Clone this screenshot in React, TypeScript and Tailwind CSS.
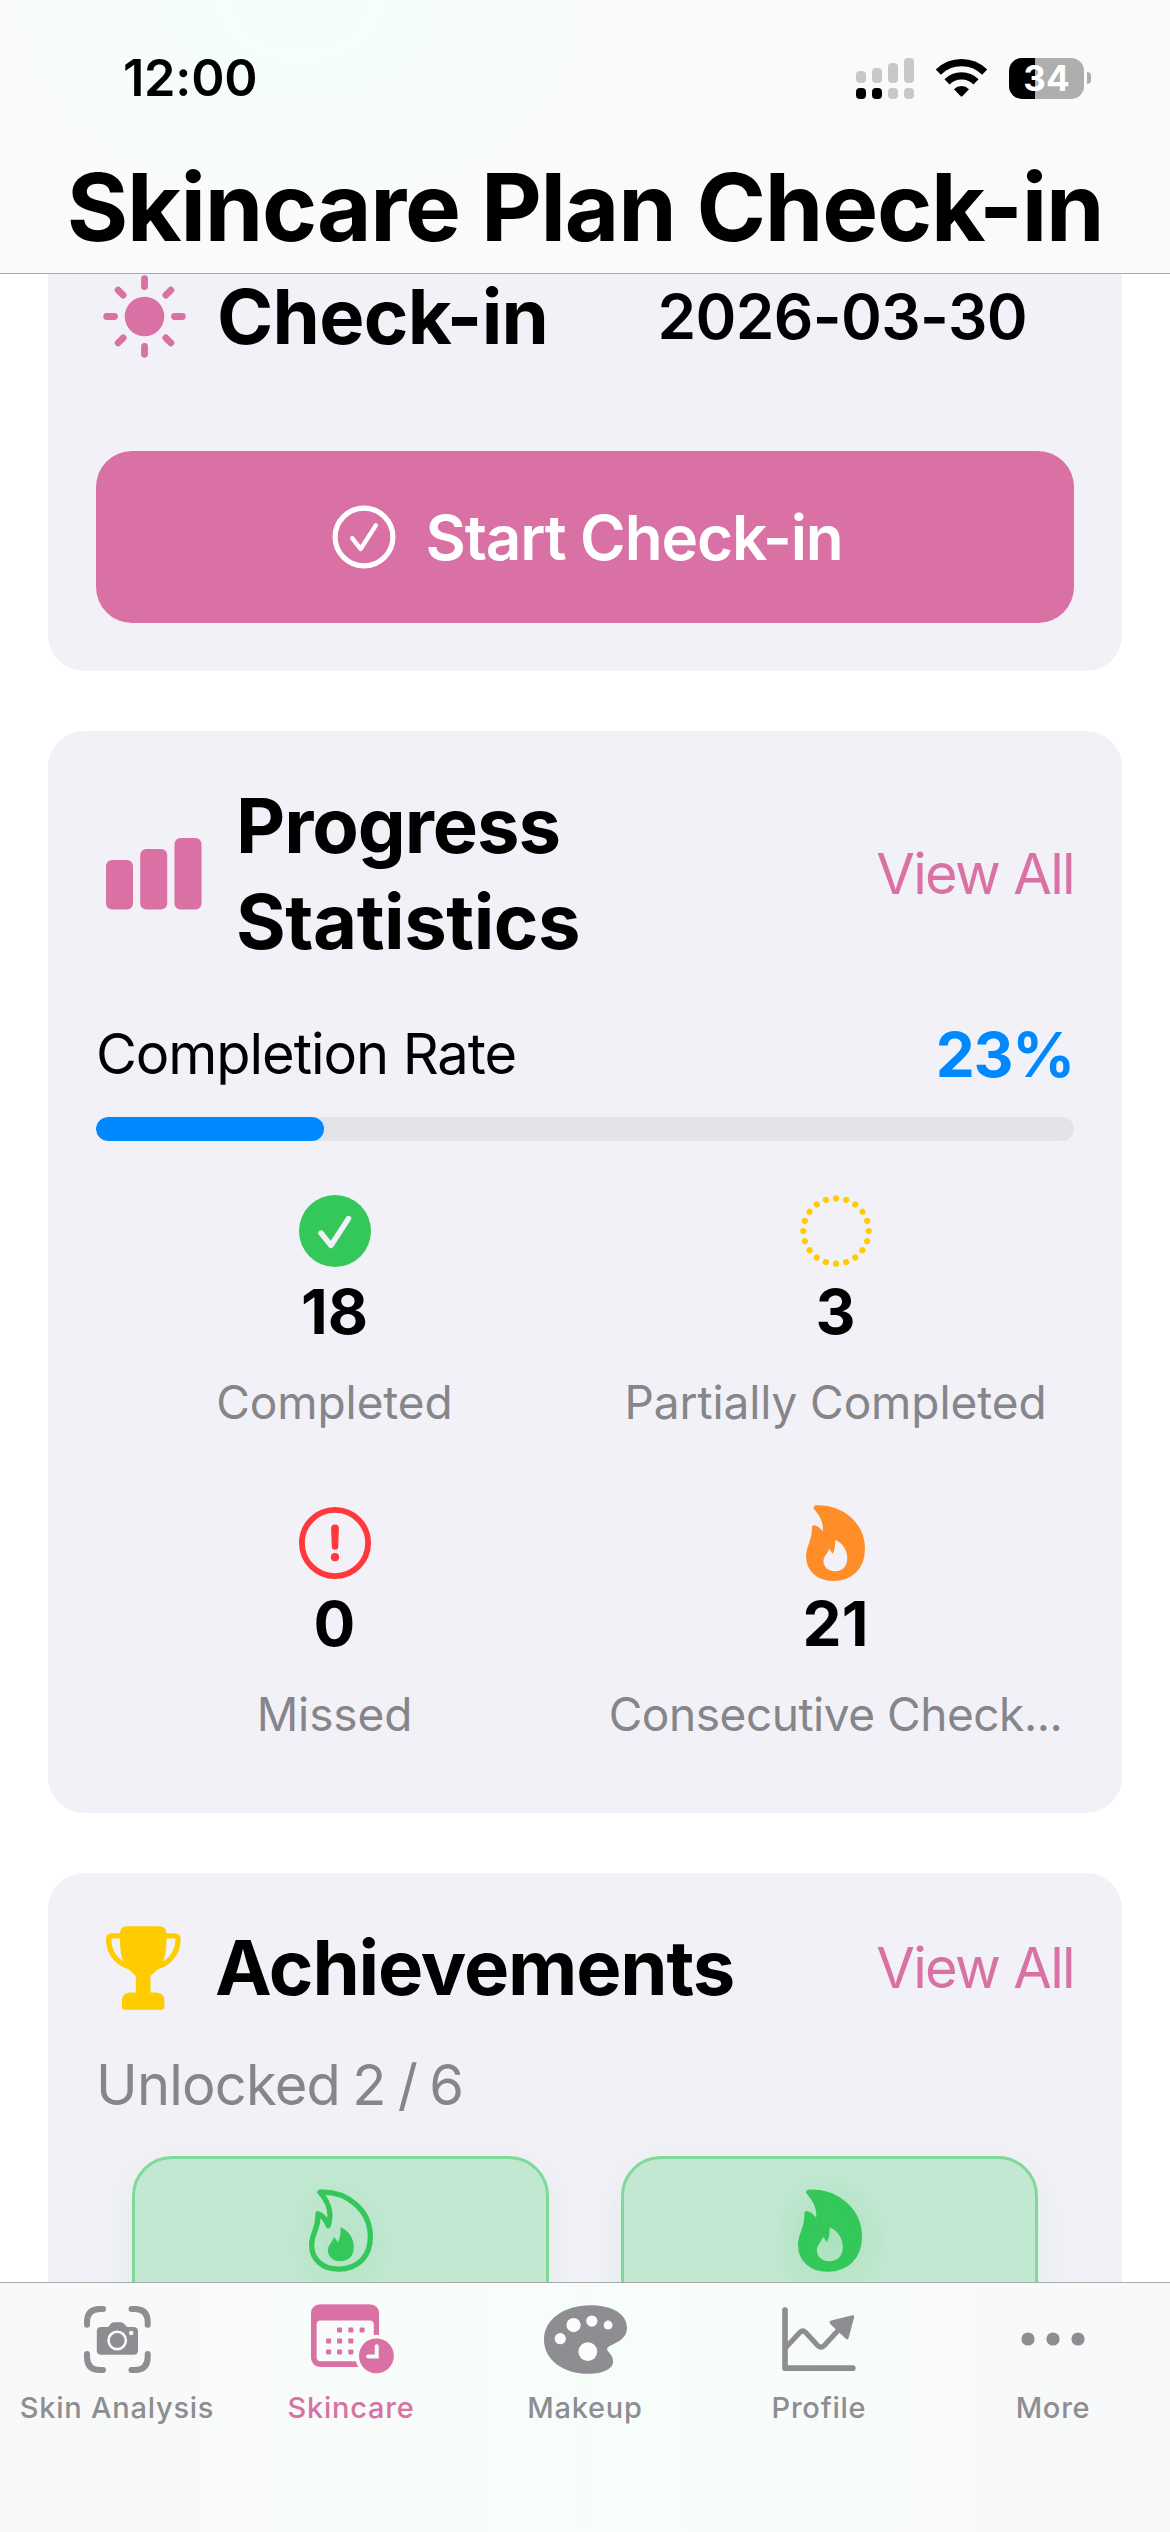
import React from 'react';

type Tone = 'filled' | 'outline';

const FLAME_OUTER = 'M686 1176 C770 1172 838 1232 838 1310 C838 1370 800 1408 742 1408 C692 1408 661 1377 661 1335 C661 1298 683 1287 680 1241 C694 1244 706 1262 711 1277 C722 1245 715 1208 686 1176Z';
const FLAME_INNER = 'M748 1282 C775 1292 788 1318 788 1342 C788 1368 773 1384 747 1384 C725 1384 710 1370 710 1350 C710 1335 725 1325 728 1310 C733 1315 737 1321 740 1327 C747 1315 749 1300 748 1282Z';

const Flame: React.FC<{ tone: Tone; className: string }> = ({ tone, className }) => (
  <svg viewBox="653 1167 193 249" className={className}>
    {tone === 'filled' ? (
      <path d={FLAME_OUTER + FLAME_INNER} fill="currentColor" fillRule="evenodd" />
    ) : (
      <path d={FLAME_INNER} fill="currentColor" />
    )}
    <path d={FLAME_OUTER} fill="none" stroke="currentColor" strokeWidth="16" strokeLinejoin="round" />
  </svg>
);

const SunIcon = () => (
  <svg viewBox="-41.5 -41.5 83 83" className="w-[83px] h-[83px] text-[#d971a4]">
    <circle r="19.8" fill="currentColor" />
    {[0, 45, 90, 135, 180, 225, 270, 315].map((angle) => (
      <path key={angle} d={angle % 90 === 0 ? 'M0 -37.8V-30' : 'M0 -37.3V-30.2'} transform={`rotate(${angle})`} stroke="currentColor" strokeWidth="6.8" strokeLinecap="round" />
    ))}
  </svg>
);

const BarsIcon = () => (
  <svg viewBox="0 0 96 72" className="w-24 h-[72px]" fill="#d971a4">
    <rect x="0" y="22" width="27" height="49.5" rx="6" />
    <rect x="34.2" y="11" width="27" height="60.5" rx="6" />
    <rect x="68.5" y="0" width="27" height="71.5" rx="6" />
  </svg>
);

const TrophyIcon = () => (
  <svg viewBox="48 378 226 252" className="w-[75px] h-[84px] text-[#ffcc00]">
    <path
      d="M90 400 Q90 378 112 378 H208 Q230 378 230 400 C232 460 224 486 205 507 L182 528 V578 H200 Q224 580 224 602 V620 Q224 630 214 630 H106 Q96 630 96 620 V602 Q96 580 120 578 H138 V528 L116 507 C95 486 90 460 90 400Z"
      fill="currentColor"
    />
    <path d="M94 407 H66 Q56 407 56 418 C56 460 85 494 125 502 M226 407 H255 Q265 407 265 418 C265 460 236 494 196 502" fill="none" stroke="currentColor" strokeWidth="16" />
  </svg>
);

const CheckCircleOutline = () => (
  <svg viewBox="0 0 64 64" className="w-16 h-16" fill="none" stroke="white" strokeLinecap="round" strokeLinejoin="round">
    <circle cx="32" cy="32" r="28.9" strokeWidth="5.2" />
    <path d="M20.2 33.2 L28.6 44 L43.8 20.4" strokeWidth="4.4" />
  </svg>
);

const CheckCircleFilled = () => (
  <svg viewBox="0 0 72 72" className="w-[72px] h-[72px]">
    <circle cx="36" cy="36" r="36" fill="#34c759" />
    <path d="M22 38 L32 50.5 L49.5 23.5" fill="none" stroke="#f2f1f7" strokeWidth="5.4" strokeLinecap="round" strokeLinejoin="round" />
  </svg>
);

const DottedCircle = () => (
  <svg viewBox="-36 -36 72 72" className="w-[72px] h-[72px]" fill="#ffcc00">
    {Array.from({ length: 20 }, (_, i) => (
      <circle key={i} cx="0" cy="-32.7" r="3.1" transform={`rotate(${i * 18})`} />
    ))}
  </svg>
);

const AlertCircle = () => (
  <svg viewBox="0 0 72 72" className="w-[72px] h-[72px]" fill="#ff383c">
    <circle cx="36" cy="36" r="33.1" fill="none" stroke="#ff383c" strokeWidth="5.8" />
    <path d="M32.1 21.5 a3.9 3.9 0 0 1 7.8 0 L39.2 39.5 a3.2 3.2 0 0 1 -6.4 0Z" />
    <circle cx="36" cy="50.2" r="4.1" />
  </svg>
);

const CameraScanIcon = () => (
  <svg viewBox="83 2305 67 67" className="w-[67px] h-[67px]">
    <path
      d="M86 2323.7 V2321 Q86 2308 99 2308 H102 M130.5 2308 H133.7 Q146.7 2308 146.7 2321 V2323.7 M146.7 2353 V2356 Q146.7 2369 133.7 2369 H130.5 M102 2369 H99 Q86 2369 86 2356 V2353"
      fill="none" stroke="currentColor" strokeWidth="6" strokeLinecap="round"
    />
    <path d="M100 2326 H106 Q107.5 2326 108.5 2324.5 L109.5 2323 Q110.8 2321.3 113 2321.3 H120 Q122 2321.3 123.4 2323 L124.6 2324.5 Q125.7 2326 127.5 2326 H132.5 Q137 2326 137 2330.5 V2349.3 Q137 2353.8 132.5 2353.8 H100.3 Q95.8 2353.8 95.8 2349.3 V2330.5 Q95.8 2326 100 2326Z" fill="currentColor" />
    <circle cx="116.2" cy="2339.4" r="8.7" fill="none" stroke="#f9fdfb" strokeWidth="2.6" />
    <circle cx="130.2" cy="2332" r="2.2" fill="#f9fdfb" />
  </svg>
);

const CalendarClockIcon = () => (
  <svg viewBox="63 51 250 210" className="w-[83px] h-[70px] ml-[2px]">
    <mask id="calendar-cut">
      <rect x="63" y="51" width="250" height="210" fill="white" />
      <rect x="80" y="100" width="172" height="123" rx="12" fill="black" />
      <circle cx="260" cy="207" r="64" fill="black" />
    </mask>
    <rect x="63" y="51" width="205" height="189" rx="27" fill="currentColor" mask="url(#calendar-cut)" />
    {[[149, 129], [183, 129], [217, 129], [116, 162], [149, 162], [183, 162], [116, 195], [149, 195], [183, 195]].map(([x, y]) => (
      <rect key={`${x}-${y}`} x={x - 7.5} y={y - 7.5} width="15" height="15" rx="2.5" fill="currentColor" />
    ))}
    <circle cx="260" cy="207" r="52.5" fill="currentColor" />
    <path d="M261 178 V209 H235" fill="none" stroke="#f4fcf8" strokeWidth="12" strokeLinecap="round" strokeLinejoin="miter" />
  </svg>
);

const PaletteIcon = () => (
  <svg viewBox="38 42 250 207" className="w-[83px] h-[69px]">
    <path d="M38 146 C38 85 98 42 178 42 C247 42 288 70 288 110 C288 156 228 160 228 174 C228 184 246 190 246 212 C246 235 214 249 172 249 C97 249 38 207 38 146Z" fill="currentColor" />
    <g fill="#f9fefb">
      <circle cx="127" cy="102" r="21.5" />
      <circle cx="182" cy="90" r="17" />
      <circle cx="231" cy="102" r="13.5" />
      <circle cx="87" cy="143" r="17" />
      <circle cx="170" cy="182" r="28.5" />
    </g>
  </svg>
);

const ChartIcon = () => (
  <svg viewBox="753 50 222 193" className="w-[74px] h-16">
    <g fill="none" stroke="currentColor" strokeWidth="17" strokeLinecap="round" strokeLinejoin="round">
      <path d="M761.5 59 V234.5 H966" />
      <path d="M766 170 L806 127 Q815 118 824 127 L860 166 Q870 176 880 166 L922 120" strokeWidth="15.5" />
    </g>
    <path d="M901 91 L965 75 Q971 74 970 81 L953 144 Q950 150 945 146 L898 101 Q893 94 901 91Z" fill="currentColor" />
  </svg>
);

const MoreIcon = () => (
  <svg viewBox="0 0 64 14" className="w-16 h-3.5" fill="currentColor">
    <circle cx="7" cy="7" r="6.6" />
    <circle cx="32" cy="7" r="6.6" />
    <circle cx="57" cy="7" r="6.6" />
  </svg>
);

const SignalIcon = () => (
  <svg viewBox="856 57 58 41" className="w-[58px] h-[41px]" fill="#c8c8c8">
    <rect x="856" y="70" width="10" height="12" rx="4" />
    <rect x="872" y="67" width="10" height="15" rx="4" />
    <rect x="888" y="62" width="10" height="20" rx="4" />
    <rect x="904" y="57" width="10" height="25" rx="4" />
    <rect x="856" y="87" width="10" height="11" rx="4" fill="black" />
    <rect x="872" y="87" width="10" height="11" rx="4" fill="black" />
    <rect x="888" y="87" width="10" height="11" rx="4" />
    <rect x="904" y="87" width="10" height="11" rx="4" />
  </svg>
);

const WifiIcon = () => (
  <svg viewBox="408 86 153 113" className="w-[51px] h-[38px] ml-[22px]">
    <g fill="none" stroke="black">
      <path d="M415 125 A99 99 0 0 1 554 125" strokeWidth="22" />
      <path d="M441 154 A62 62 0 0 1 528 154" strokeWidth="22" />
    </g>
    <path d="M462 176 A32 32 0 0 1 507 176 L487 197 Q484.500 199.500 482 197Z" fill="black" />
  </svg>
);

const stats = [
  { icon: <CheckCircleFilled />, value: '18', label: 'Completed' },
  { icon: <DottedCircle />, value: '3', label: 'Partially Completed' },
  { icon: <AlertCircle />, value: '0', label: 'Missed' },
  { icon: <Flame tone="filled" className="w-[59px] h-[76px] text-[#ff8d28]" />, value: '21', label: 'Consecutive Check...' },
];

const tabs = [
  { icon: <CameraScanIcon />, label: 'Skin Analysis' },
  { icon: <CalendarClockIcon />, label: 'Skincare', active: true },
  { icon: <PaletteIcon />, label: 'Makeup' },
  { icon: <ChartIcon />, label: 'Profile' },
  { icon: <MoreIcon />, label: 'More' },
];

const badges: Tone[] = ['outline', 'filled'];

const App: React.FC = () => {
  const completion = 23.3;

  return (
    <div className="flex flex-col w-[1170px] h-[2532px] overflow-hidden bg-white text-black font-['Inter','Liberation_Sans',sans-serif]">
      <header className="shrink-0 h-[274px] border-b border-[#a9a9ac] bg-[#fafafa] bg-[radial-gradient(ellipse_420px_300px_at_300px_0px,#f4fff9,#fafafa)]">
        <div className="flex items-center justify-between h-[156px] pl-[123px] pr-[79px]">
          <span className="text-[50.5px] font-semibold tracking-[-0.005em]">12:00</span>
          <div className="flex items-center">
            <SignalIcon />
            <WifiIcon />
            <div className="flex items-center ml-[22px] gap-[3px]">
              <div className="flex items-center justify-center w-[75px] h-[41px] rounded-[13px] bg-linear-to-r from-black from-35% to-[#aeaeae] to-35% text-white text-[35px] leading-none font-bold">34</div>
              <div className="w-1 h-3 rounded-r-full bg-[#aeaeae]" />
            </div>
          </div>
        </div>
        <h1 className="flex items-center justify-center h-[102px] text-[94px] font-bold tracking-[-0.013em] whitespace-nowrap">Skincare Plan Check-in</h1>
      </header>

      <main className="flex flex-col h-[2008px] shrink-0 gap-[60px] px-12 overflow-hidden">
        <section className="shrink-0 px-12 pb-12 bg-[#f2f1f7] rounded-b-[36px]">
          <div className="flex items-center h-[85px] pl-[7px] pr-[47px]">
            <SunIcon />
            <h2 className="ml-[31px] pb-[2px] text-[76px] leading-none font-bold tracking-[-0.009em]">Check-in</h2>
            <span className="ml-auto text-[62px] leading-none font-semibold tracking-[-0.01em]">2026-03-30</span>
          </div>
          <button className="flex items-center justify-center w-full h-[172px] mt-[92px] pl-[5px] gap-[29px] rounded-[36px] bg-[#d971a4] text-white">
            <CheckCircleOutline />
            <span className="text-[62px] font-semibold tracking-[-0.018em]">Start Check-in</span>
          </button>
        </section>

        <section className="shrink-0 h-[1082px] px-12 pt-[47px] bg-[#f2f1f7] rounded-[36px]">
          <div className="flex items-center h-48">
            <div className="ml-[10px]"><BarsIcon /></div>
            <h2 className="ml-[34px] w-[420px] pb-[2px] text-[76px] leading-[96px] font-bold tracking-[-0.014em]">
              Progress <span className="tracking-[-0.006em]">Statistics</span>
            </h2>
            <span className="ml-auto text-[56px] text-[#d971a4] tracking-[-0.03em]">View All</span>
          </div>
          <div className="flex items-center justify-between h-20 mt-11">
            <span className="text-[56px] tracking-[-0.019em]">Completion Rate</span>
            <span className="text-[62px] font-bold text-[#0088ff] tracking-[-0.02em]">23%</span>
          </div>
          <div className="h-6 mt-[23px] rounded-full bg-[#e4e3e9] overflow-hidden">
            <div className="h-full rounded-full bg-[#0088ff]" style={{ width: `${completion}%` }} />
          </div>
          <div className="grid grid-cols-2 gap-x-6 gap-y-[70px] mt-[50px]">
            {stats.map((stat) => (
              <div key={stat.label} className="flex flex-col items-center">
                <div className="flex items-center justify-center h-20">{stat.icon}</div>
                <span className="h-20 text-[62px] leading-[82px] font-bold">{stat.value}</span>
                <span className={`h-[62px] mt-5 text-[46px] leading-[62px] text-[#86858a] whitespace-nowrap ${stat.label.endsWith('...') ? 'tracking-[-0.01em]' : 'tracking-[-0.002em]'}`}>{stat.label}</span>
              </div>
            ))}
          </div>
        </section>

        <section className="shrink-0 h-[900px] px-12 pt-[47px] bg-[#f2f1f7] rounded-[36px]">
          <div className="flex items-center h-24">
            <div className="ml-[10px]"><TrophyIcon /></div>
            <h2 className="ml-[34px] pb-[2px] text-[76px] leading-none font-bold tracking-[-0.015em]">Achievements</h2>
            <span className="ml-auto text-[56px] text-[#d971a4] tracking-[-0.03em]">View All</span>
          </div>
          <p className="h-[72px] mt-[33px] text-[56px] leading-[72px] text-[#86858a] tracking-[-0.014em] [word-spacing:-0.05em]">Unlocked 2 / 6</p>
          <div className="flex gap-[72px] mt-[35px] px-9">
            {badges.map((tone) => (
              <div key={tone} className="flex justify-center flex-1 h-[420px] pt-[30px] rounded-[40px] border-[3px] border-[#7fd998] bg-[#c3e8d2] shadow-[0_12px_36px_rgba(52,199,89,0.10)]">
                <Flame tone={tone} className="w-[64px] h-[83px] text-[#34c759] drop-shadow-[0_6px_20px_rgba(52,199,89,0.25)]" />
              </div>
            ))}
          </div>
        </section>
      </main>

      <nav className="grid grid-cols-5 shrink-0 h-[250px] border-t border-[#a9abaa] bg-linear-to-r from-[#f8f8f9] via-[#f7fefa] to-[#f8f8f9]">
        {tabs.map((tab) => (
          <div key={tab.label} className={`flex flex-col items-center ${tab.active ? 'text-[#d971a4]' : 'text-[#8e8d92]'}`}>
            <div className="flex items-center justify-center h-28">{tab.icon}</div>
            <span className="text-[29px] leading-[25px] font-medium tracking-[0.026em] whitespace-nowrap">{tab.label}</span>
          </div>
        ))}
      </nav>
    </div>
  );
};

export default App;
